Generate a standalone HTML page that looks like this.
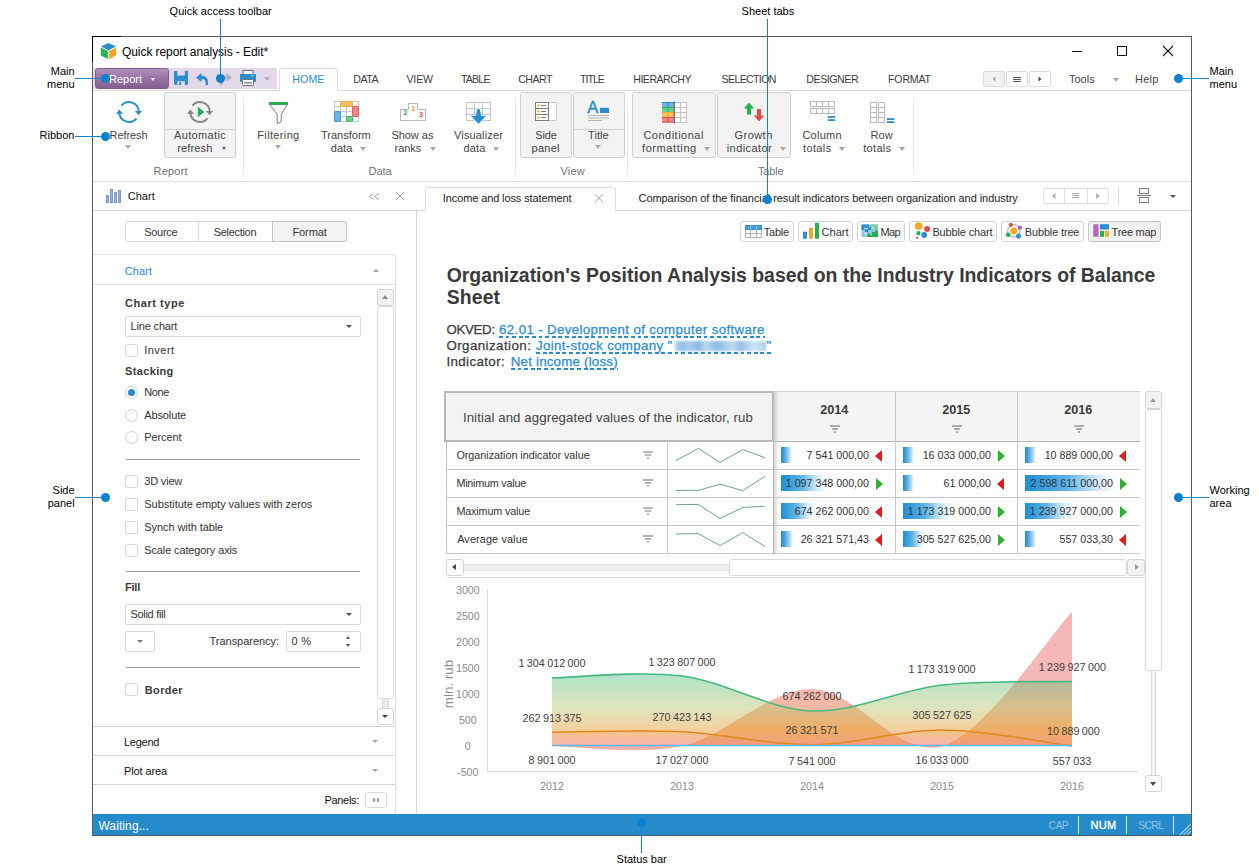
<!DOCTYPE html>
<html lang="en">
<head>
<meta charset="utf-8">
<title>Quick report analysis - Edit*</title>
<style>
*{box-sizing:border-box;margin:0;padding:0}
html,body{width:1259px;height:868px;overflow:hidden;background:#fff}
body{position:relative;font-family:"Liberation Sans",sans-serif;font-size:11px;color:#333}
.abs{position:absolute}
.t{position:absolute;white-space:nowrap;line-height:1}
/* annotations */
.an{position:absolute;white-space:nowrap;font:11px/13px "Liberation Sans",sans-serif;color:#000;z-index:50}
.ln{position:absolute;background:#0f83cc;z-index:50}
.dot{position:absolute;width:9px;height:9px;border-radius:50%;background:#0a82cf;z-index:51}
/* window */
#win{position:absolute;left:92px;top:36px;width:1100px;height:800px;border:1px solid #5a5a5a;background:#fff}
/* everything inside positioned relative to page (not window) for easy measuring */
#ui{position:absolute;left:0;top:0;width:1259px;height:868px}
.seg{font-family:"Liberation Sans",sans-serif;font-size:12px;color:#444}
.mt{position:absolute;white-space:nowrap;font-size:10.5px;line-height:12px;color:#3c3c3c;top:73px;letter-spacing:-0.2px}
.rb{position:absolute;top:92px;height:66px;border:1px solid #cfcfcf;border-radius:3px;background:#f3f3f3}
.rl{position:absolute;white-space:nowrap;text-align:center;font-size:12px;line-height:13px;color:#444;transform:translateX(-50%)}
.gl{position:absolute;white-space:nowrap;font-size:11.5px;line-height:12px;color:#6e6e6e;top:165px;transform:translateX(-50%)}
.gs{position:absolute;top:93px;height:85px;width:1px;background:linear-gradient(rgba(226,226,226,0.3),#e3e3e3 18%,#e3e3e3 82%,rgba(226,226,226,0.3))}
.da{position:absolute;width:0;height:0;border-left:3.5px solid transparent;border-right:3.5px solid transparent;border-top:4px solid #a8a8a8}
.dad{border-top-color:#555}
.sp{position:absolute;white-space:nowrap;font-size:11px;line-height:13px;color:#333}
.cb{position:absolute;left:125px;width:13px;height:13px;border:1px solid #d6d6d6;border-radius:2px;background:#fff}
.rd{position:absolute;left:125px;width:13px;height:13px;border:1px solid #d0d0d0;border-radius:50%;background:#fff}
.hr{position:absolute;left:126px;width:234px;height:1px;background:#9c9c9c}
.sel{position:absolute;left:125px;width:236px;height:21px;border:1px solid #d9d9d9;border-radius:2px;background:#fff}
.vb{position:absolute;top:221px;height:21px;border:1px solid #d4d4d4;border-radius:3px;background:#fff}
.vb span{position:absolute;top:4px;font-size:11px;line-height:13px;color:#333;white-space:nowrap}
.rowl{position:absolute;left:456px;font-size:10.7px;line-height:12px;color:#333;white-space:nowrap}
.val{position:absolute;font-size:10.7px;line-height:12px;color:#333;white-space:nowrap;text-align:right}
.bar{position:absolute;height:16px;background:linear-gradient(90deg,#1d8fd6 0%,#5fb3e6 45%,rgba(190,225,246,.6) 80%,rgba(255,255,255,0) 100%)}
.hl{position:absolute;height:1px;background:#c9c9c9}
.vl{position:absolute;width:1px;background:#c9c9c9}
.tr{position:absolute;width:0;height:0;border-top:6.3px solid transparent;border-bottom:6.3px solid transparent}
.trr{border-left:7.6px solid #2fb12f}
.trl{border-right:7.6px solid #e51a1a}
</style>
</head>
<body>
<div id="win"></div>
<div id="ui">
<!-- annotations -->
<div class="an" style="left:169.6px;top:4.7px">Quick access toolbar</div>
<div class="ln" style="left:220px;top:19px;width:1px;height:58px"></div>
<div class="dot" style="left:216px;top:74px"></div>
<div class="an" style="left:741.6px;top:4.7px">Sheet tabs</div>
<div class="ln" style="left:767px;top:19px;width:1px;height:178px"></div>
<div class="dot" style="left:763px;top:195px"></div>
<div class="an" style="left:30px;top:64.7px;width:44.6px;text-align:right">Main<br>menu</div>
<div class="ln" style="left:75px;top:78px;width:28px;height:1px"></div>
<div class="dot" style="left:101px;top:74px"></div>
<div class="an" style="left:30px;top:128.6px;width:44.4px;text-align:right">Ribbon</div>
<div class="ln" style="left:75px;top:136px;width:28px;height:1px"></div>
<div class="dot" style="left:101px;top:132px"></div>
<div class="an" style="left:30px;top:483.7px;width:44.6px;text-align:right">Side<br>panel</div>
<div class="ln" style="left:75px;top:497px;width:28px;height:1px"></div>
<div class="dot" style="left:101px;top:493px"></div>
<div class="an" style="left:1209.5px;top:64.7px">Main<br>menu</div>
<div class="ln" style="left:1181px;top:78px;width:28px;height:1px"></div>
<div class="dot" style="left:1174px;top:74px"></div>
<div class="an" style="left:1209.5px;top:483.7px">Working<br>area</div>
<div class="ln" style="left:1181px;top:497px;width:28px;height:1px"></div>
<div class="dot" style="left:1174px;top:493px"></div>
<div class="an" style="left:616.6px;top:852.7px">Status bar</div>
<div class="ln" style="left:641px;top:825px;width:1px;height:28px"></div>
<div class="dot" style="left:637px;top:818px"></div>
<!-- title bar -->
<div class="abs" style="left:92px;top:36px;width:29px;height:1px;background:#000"></div>
<div class="abs" style="left:92px;top:36px;width:1px;height:26px;background:#000"></div>
<svg class="abs" style="left:100px;top:42px" width="17" height="18" viewBox="0 0 17 18">
<polygon points="8.5,1 16,4.6 8.5,8.2 1,4.6" fill="#2b8ccf"/>
<polygon points="0.8,5.6 7.9,9 7.9,17 0.8,13.4" fill="#27b35a"/>
<polygon points="9.1,9 16.2,5.6 16.2,13.4 9.1,17" fill="#f5a623"/>
</svg>
<div class="t" style="left:122px;top:45px;font-size:12px;line-height:14px;color:#000;letter-spacing:-0.07px">Quick report analysis - Edit*</div>
<div class="abs" style="left:1072px;top:51px;width:10px;height:1px;background:#111"></div>
<div class="abs" style="left:1117px;top:46px;width:10px;height:10px;border:1px solid #111"></div>
<svg class="abs" style="left:1162px;top:45px" width="12" height="12" viewBox="0 0 12 12"><path d="M1 1 L11 11 M11 1 L1 11" stroke="#111" stroke-width="1.1" fill="none"/></svg>
<!-- menu bar -->
<div class="abs" style="left:93px;top:68px;width:184px;height:21px;background:#e3d8e8"></div>
<div class="abs" style="left:95px;top:68px;width:74px;height:21px;border:1px solid #7f5c8c;border-radius:3px;background:linear-gradient(#b391be,#9a74a7 45%,#83608f)"></div>
<div class="t" style="left:109px;top:72.5px;font-size:11px;line-height:13px;color:#fff">Report</div>
<div class="da" style="left:150.5px;top:78px;border-top-color:#fff;border-left-width:2.7px;border-right-width:2.7px;border-top-width:3px"></div>
<!-- quick access icons -->
<svg class="abs" style="left:173px;top:70px" width="16" height="16" viewBox="0 0 16 16">
<path d="M1 1 H4.3 V5.6 H11.9 V1 H15 V13.8 L13.8 15 H11.9 V11.3 H4.3 V15 H2.2 L1 13.8 Z" fill="#2b8ccf"/>
<rect x="6.1" y="12.2" width="2" height="2.8" fill="#2b8ccf"/>
</svg>
<svg class="abs" style="left:195px;top:72px" width="14" height="14" viewBox="0 0 14 14">
<path d="M1 5.5 L6.5 1 V3.8 C10.5 3.8 13 6.3 13 10 V13 H10.6 V10 C10.6 7.8 9 6.9 6.5 6.9 V10 Z" fill="#2b8ccf"/>
</svg>
<svg class="abs" style="left:213px;top:72px" width="20" height="14" viewBox="0 0 20 14">
<path d="M19 5.5 L13.5 1 V3.8 C9.5 3.8 7 6.3 7 10 V13 H9.4 V10 C9.4 7.8 11 6.9 13.5 6.9 V10 Z" fill="#b7aebb"/>
</svg>
<svg class="abs" style="left:240px;top:70px" width="16" height="16" viewBox="0 0 16 16">
<rect x="3" y="0.5" width="10" height="5" fill="#fff" stroke="#6d6d6d" stroke-width="1"/>
<rect x="0" y="4" width="16" height="8" rx="1" fill="#2b8ccf"/>
<rect x="11" y="5" width="3" height="1.4" fill="#7fc0ea"/>
<rect x="2.5" y="9.5" width="11" height="6" rx="1" fill="#fff" stroke="#6d6d6d" stroke-width="1"/>
<rect x="4" y="12.2" width="8" height="1.2" fill="#6d6d6d"/>
</svg>
<div class="da" style="left:264px;top:77px;border-top-color:#b5abb9"></div>
<!-- tabs -->
<div class="abs" style="left:93px;top:90px;width:1098px;height:1px;background:#dcdcdc"></div>
<div class="abs" style="left:279px;top:68px;width:59px;height:23px;border:1px solid #dcdcdc;border-bottom:none;border-radius:3px 3px 0 0;background:#fff"></div>
<div class="t" style="left:292.3px;top:73.4px;font:10.6px/12px 'Liberation Sans',sans-serif;letter-spacing:0.1px;color:#2a8bd0">HOME</div>
<div class="t" style="left:353.3px;top:73.4px;font:10.6px/12px 'Liberation Sans',sans-serif;letter-spacing:-0.5px;color:#3c3c3c">DATA</div>
<div class="t" style="left:406.4px;top:73.4px;font:10.6px/12px 'Liberation Sans',sans-serif;letter-spacing:-0.12px;color:#3c3c3c">VIEW</div>
<div class="t" style="left:461px;top:73.4px;font:10.6px/12px 'Liberation Sans',sans-serif;letter-spacing:-0.82px;color:#3c3c3c">TABLE</div>
<div class="t" style="left:518.2px;top:73.4px;font:10.6px/12px 'Liberation Sans',sans-serif;letter-spacing:-0.5px;color:#3c3c3c">CHART</div>
<div class="t" style="left:580px;top:73.4px;font:10.6px/12px 'Liberation Sans',sans-serif;letter-spacing:-0.99px;color:#3c3c3c">TITLE</div>
<div class="t" style="left:633.3px;top:73.4px;font:10.6px/12px 'Liberation Sans',sans-serif;letter-spacing:-0.52px;color:#3c3c3c">HIERARCHY</div>
<div class="t" style="left:721.6px;top:73.4px;font:10.6px/12px 'Liberation Sans',sans-serif;letter-spacing:-0.66px;color:#3c3c3c">SELECTION</div>
<div class="t" style="left:806.3px;top:73.4px;font:10.6px/12px 'Liberation Sans',sans-serif;letter-spacing:-0.44px;color:#3c3c3c">DESIGNER</div>
<div class="t" style="left:888.1px;top:73.4px;font:10.6px/12px 'Liberation Sans',sans-serif;letter-spacing:-0.21px;color:#3c3c3c">FORMAT</div>

<!-- nav buttons -->
<div class="abs" style="left:983px;top:71px;width:22px;height:16px;border:1px solid #dadada;border-radius:2px;background:#f1f1f1"></div>
<div class="abs" style="left:1006px;top:71px;width:22px;height:16px;border:1px solid #dadada;border-radius:2px;background:#fff"></div>
<div class="abs" style="left:1029px;top:71px;width:22px;height:16px;border:1px solid #dadada;border-radius:2px;background:#fff"></div>
<svg class="abs" style="left:983px;top:71px" width="68" height="16" viewBox="0 0 68 16">
<path d="M12.5 5.5 L9.5 8 L12.5 10.5 Z" fill="#aaa"/>
<path d="M30 6.5 h8 M30 8.5 h8 M30 10.5 h8" stroke="#555" stroke-width="1"/>
<path d="M55.5 5.5 L58.5 8 L55.5 10.5 Z" fill="#444"/>
</svg>
<div class="t" style="left:1069px;top:73px;font-size:11px;line-height:13px;color:#444">Tools</div>
<div class="da" style="left:1113px;top:78px"></div>
<div class="t" style="left:1135px;top:73px;font-size:11px;line-height:13px;color:#444;letter-spacing:0.25px">Help</div>
<!-- ribbon -->
<div class="abs" style="left:93px;top:181px;width:1098px;height:1px;background:#dedede"></div>
<div class="rb" style="left:164px;width:72px"></div><div class="abs" style="left:165px;top:129px;width:70px;height:1px;background:#cfcfcf"></div>
<div class="rb" style="left:520px;width:52px"></div>
<div class="rb" style="left:573px;width:52px"></div><div class="abs" style="left:574px;top:129px;width:50px;height:1px;background:#cfcfcf"></div>
<div class="rb" style="left:632px;width:84px"></div>
<div class="rb" style="left:717px;width:74px"></div>
<div class="gs" style="left:243px"></div><div class="gs" style="left:515px"></div><div class="gs" style="left:627px"></div><div class="gs" style="left:913px"></div>
<!-- refresh icon -->
<svg class="abs" style="left:115px;top:99px" width="28" height="26" viewBox="0 0 28 26">
<path d="M6.5 6.7 A9.7 9.7 0 0 1 23.7 12.5" fill="none" stroke="#2b8ccf" stroke-width="2"/>
<path d="M21.5 19.3 A9.7 9.7 0 0 1 4.3 13.5" fill="none" stroke="#2b8ccf" stroke-width="2"/>
<path d="M19.9 12 H27.1 L23.6 16.3 Z" fill="#2b8ccf"/>
<path d="M0.9 14.8 H8.1 L4.3 10.6 Z" fill="#2b8ccf"/>
</svg>
<div class="da" style="left:125px;top:145px"></div>
<!-- auto refresh icon -->
<svg class="abs" style="left:186px;top:99px" width="28" height="26" viewBox="0 0 28 26">
<path d="M6.5 6.7 A9.7 9.7 0 0 1 23.7 12.5" fill="none" stroke="#858585" stroke-width="2"/>
<path d="M21.5 19.3 A9.7 9.7 0 0 1 4.3 13.5" fill="none" stroke="#858585" stroke-width="2"/>
<path d="M19.9 12 H27.1 L23.6 16.3 Z" fill="#858585"/>
<path d="M0.9 14.8 H8.1 L4.3 10.6 Z" fill="#858585"/>
<path d="M11.8 7.8 L18.2 13 L11.8 18.3 Z" fill="#22b14c"/>
</svg>
<div class="da dad" style="left:222px;top:147.2px;border-left-width:2.7px;border-right-width:2.7px;border-top-width:3px"></div>
<!-- filter icon -->
<svg class="abs" style="left:268px;top:101px" width="21" height="24" viewBox="0 0 21 24">
<path d="M1.5 3.5 L9.2 13.2 V22.6 L13.3 20.8 V13.2 L19.6 3.5 Z" fill="#fff" stroke="#7d7d7d" stroke-width="1"/>
<rect x="1" y="1" width="19" height="2.8" rx="0.8" fill="#22b14c"/>
</svg>
<div class="da" style="left:275px;top:145px"></div>
<!-- transform data icon -->
<svg class="abs" style="left:334px;top:101px" width="26" height="22" viewBox="0 0 26 22">
<rect x="0.5" y="0.5" width="24" height="20" fill="#fff" stroke="#c8c8c8"/>
<path d="M6.5 0.5 V20.5 M12.5 0.5 V20.5 M18.5 0.5 V20.5 M0.5 5.5 H24.5 M0.5 10.5 H24.5 M0.5 15.5 H24.5" stroke="#c8c8c8" stroke-width="1" fill="none"/>
<rect x="6.5" y="0.5" width="12" height="5" rx="1" fill="#f8c262" stroke="#f5a623" stroke-width="0.8"/>
<rect x="18.5" y="5.5" width="6" height="10" rx="1" fill="#ee8a8a" stroke="#e24a4a" stroke-width="0.8"/>
<rect x="0.5" y="10.5" width="6" height="10" rx="1" fill="#6db2e2" stroke="#2b8ccf" stroke-width="0.8"/>
<rect x="12.5" y="15.5" width="6" height="5" rx="1" fill="#6dcf91" stroke="#27b35a" stroke-width="0.8"/>
</svg>
<div class="da" style="left:360px;top:147px"></div>
<!-- show as ranks icon -->
<svg class="abs" style="left:399px;top:102px" width="28" height="20" viewBox="0 0 28 20">
<path d="M1.5 18.5 V7.5 H9.5 V1.5 H18.5 V7.5 H26.5 V18.5 Z" fill="#fff" stroke="#b9b9b9" stroke-width="1"/>
<text x="4.2" y="13" font-family="Liberation Sans, sans-serif" font-size="7.5" font-weight="bold" fill="#27b35a">2</text>
<text x="12.2" y="9" font-family="Liberation Sans, sans-serif" font-size="7.5" font-weight="bold" fill="#f5a623">1</text>
<text x="20" y="15" font-family="Liberation Sans, sans-serif" font-size="7.5" font-weight="bold" fill="#e24a4a">3</text>
</svg>
<div class="da" style="left:430px;top:147px"></div>
<!-- visualizer data icon -->
<svg class="abs" style="left:465px;top:101px" width="27" height="24" viewBox="0 0 27 24">
<rect x="1.5" y="1.5" width="24" height="18" fill="#fff" stroke="#c4c4c4"/>
<path d="M9.5 1.5 V19.5 M17.5 1.5 V19.5 M1.5 7.5 H25.5 M1.5 13.5 H25.5" stroke="#c4c4c4" fill="none"/>
<path d="M12 7.5 H15 L16.6 14.6 H21.8 L13.5 23.2 L5.2 14.6 H10.4 Z" fill="#2b8ccf" stroke="#fff" stroke-width="0.8"/>
</svg>
<div class="da" style="left:493px;top:147px"></div>
<!-- side panel icon -->
<svg class="abs" style="left:534px;top:101px" width="24" height="21" viewBox="0 0 24 21">
<rect x="1.5" y="1.5" width="21" height="18" rx="1" fill="#fff" stroke="#c9c9c9"/>
<rect x="1.5" y="1.5" width="13" height="18" fill="#fff" stroke="#7d7d7d"/>
<path d="M1.5 7.5 H14.5 M1.5 13.5 H14.5" stroke="#7d7d7d"/>
<rect x="3.5" y="3.5" width="2" height="2" fill="#f5a623"/><rect x="3.5" y="9.5" width="2" height="2" fill="#f5a623"/><rect x="3.5" y="15.5" width="2" height="2" fill="#f5a623"/>
<path d="M7 4.5 H12 M7 10.5 H12 M7 16.5 H12" stroke="#7d7d7d"/>
</svg>
<!-- title icon -->
<svg class="abs" style="left:587px;top:100px" width="24" height="24" viewBox="0 0 24 24">
<text x="0.2" y="13" font-family="Liberation Sans, sans-serif" font-size="16.5" fill="#2b8ccf" stroke="#2b8ccf" stroke-width="0.4">A</text>
<rect x="13" y="7.8" width="9" height="5.2" fill="#2b8ccf"/>
<path d="M1 15.5 H22 M1 18 H22 M1 20.5 H15" stroke="#b5b5b5" stroke-width="1"/>
</svg>
<div class="da" style="left:595px;top:145px"></div>
<!-- conditional formatting icon -->
<svg class="abs" style="left:661px;top:101px" width="27" height="23" viewBox="0 0 27 23">
<rect x="13" y="1.5" width="12.5" height="20" fill="#fff" stroke="#c4c4c4"/>
<path d="M19.5 1.5 V21.5 M13 6.5 H25.5 M13 11.5 H25.5 M13 16.5 H25.5" stroke="#c4c4c4" fill="none"/>
<rect x="1" y="1" width="12" height="5" fill="#6db2e2"/><rect x="1" y="6" width="12" height="5" fill="#6dcf91"/><rect x="1" y="11" width="12" height="5" fill="#f8c262"/><rect x="1" y="16" width="12" height="5.5" fill="#ee8a8a"/>
<path d="M1 1.5 H13 M7 1 V6" stroke="#2b8ccf" fill="none"/><path d="M1 6.5 H13 M7 6 V11" stroke="#27b35a" fill="none"/><path d="M1 11.5 H13 M7 11 V16" stroke="#f5a623" fill="none"/><path d="M1 16.5 H13 M7 16 V21.5 M1 21 H13" stroke="#e24a4a" fill="none"/>
<path d="M13.3 0.5 V22.5" stroke="#6a6a6a" stroke-width="1.2"/>
</svg>
<div class="da" style="left:704px;top:147px"></div>
<!-- growth indicator icon -->
<svg class="abs" style="left:743px;top:102px" width="22" height="20" viewBox="0 0 22 20">
<path d="M6 0.5 L11.2 6.5 H8 V12.5 H4 V6.5 H0.8 Z" fill="#22b14c"/>
<path d="M16 19.5 L10.8 13.5 H14 V7 H18 V13.5 H21.2 Z" fill="#e24a4a"/>
</svg>
<div class="da" style="left:780px;top:147px"></div>
<!-- column totals icon -->
<svg class="abs" style="left:809px;top:100px" width="28" height="22" viewBox="0 0 28 22">
<path d="M1.5 1.5 H25.5 V6.5 H1.5 Z M1.5 8.5 H25.5 V13.5 H1.5 Z M7.5 1.5 V6.5 M13.5 1.5 V6.5 M19.5 1.5 V6.5 M7.5 8.5 V13.5 M13.5 8.5 V13.5 M19.5 8.5 V13.5" fill="none" stroke="#b9b9b9"/>
<rect x="18.8" y="16" width="7.4" height="1.8" fill="#2b8ccf"/><rect x="18.8" y="19.2" width="7.4" height="1.8" fill="#2b8ccf"/>
</svg>
<div class="da" style="left:839px;top:147px"></div>
<!-- row totals icon -->
<svg class="abs" style="left:869px;top:101px" width="27" height="23" viewBox="0 0 27 23">
<path d="M1.5 1.5 H7.5 V21.5 H1.5 Z M9.5 1.5 H15.5 V21.5 H9.5 Z M1.5 6.5 H7.5 M1.5 11.5 H7.5 M1.5 16.5 H7.5 M9.5 6.5 H15.5 M9.5 11.5 H15.5 M9.5 16.5 H15.5" fill="none" stroke="#b9b9b9"/>
<rect x="18" y="17.2" width="7.4" height="1.8" fill="#2b8ccf"/><rect x="18" y="20.2" width="7.4" height="1.8" fill="#2b8ccf"/>
</svg>
<div class="da" style="left:899px;top:147px"></div>
<div class="t" style="left:109.6px;top:129px;font:11px/13px 'Liberation Sans',sans-serif;letter-spacing:-0.1px;color:#444">Refresh</div>
<div class="t" style="left:174px;top:129px;font:11px/13px 'Liberation Sans',sans-serif;letter-spacing:0.35px;color:#444">Automatic</div>
<div class="t" style="left:177.3px;top:142px;font:11px/13px 'Liberation Sans',sans-serif;letter-spacing:0.14px;color:#444">refresh</div>
<div class="t" style="left:257.3px;top:129px;font:11px/13px 'Liberation Sans',sans-serif;letter-spacing:0.35px;color:#444">Filtering</div>
<div class="t" style="left:321px;top:129px;font:11px/13px 'Liberation Sans',sans-serif;color:#444">Transform</div>
<div class="t" style="left:330.8px;top:142px;font:11px/13px 'Liberation Sans',sans-serif;letter-spacing:0.04px;color:#444">data</div>
<div class="t" style="left:391.4px;top:129px;font:11px/13px 'Liberation Sans',sans-serif;letter-spacing:-0.03px;color:#444">Show as</div>
<div class="t" style="left:394.6px;top:142px;font:11px/13px 'Liberation Sans',sans-serif;letter-spacing:-0.04px;color:#444">ranks</div>
<div class="t" style="left:454px;top:129px;font:11px/13px 'Liberation Sans',sans-serif;letter-spacing:0.15px;color:#444">Visualizer</div>
<div class="t" style="left:463.6px;top:142px;font:11px/13px 'Liberation Sans',sans-serif;letter-spacing:0.12px;color:#444">data</div>
<div class="t" style="left:535.3px;top:129px;font:11px/13px 'Liberation Sans',sans-serif;letter-spacing:-0.16px;color:#444">Side</div>
<div class="t" style="left:531.5px;top:142px;font:11px/13px 'Liberation Sans',sans-serif;letter-spacing:0.26px;color:#444">panel</div>
<div class="t" style="left:588px;top:129px;font:11px/13px 'Liberation Sans',sans-serif;letter-spacing:0.08px;color:#444">Title</div>
<div class="t" style="left:643.4px;top:129px;font:11px/13px 'Liberation Sans',sans-serif;letter-spacing:0.49px;color:#444">Conditional</div>
<div class="t" style="left:642px;top:142px;font:11px/13px 'Liberation Sans',sans-serif;letter-spacing:0.59px;color:#444">formatting</div>
<div class="t" style="left:734.5px;top:129px;font:11px/13px 'Liberation Sans',sans-serif;letter-spacing:0.46px;color:#444">Growth</div>
<div class="t" style="left:726.7px;top:142px;font:11px/13px 'Liberation Sans',sans-serif;letter-spacing:0.44px;color:#444">indicator</div>
<div class="t" style="left:802.4px;top:129px;font:11px/13px 'Liberation Sans',sans-serif;letter-spacing:0.25px;color:#444">Column</div>
<div class="t" style="left:803px;top:142px;font:11px/13px 'Liberation Sans',sans-serif;letter-spacing:0.38px;color:#444">totals</div>
<div class="t" style="left:870.4px;top:129px;font:11px/13px 'Liberation Sans',sans-serif;letter-spacing:0.19px;color:#444">Row</div>
<div class="t" style="left:863.2px;top:142px;font:11px/13px 'Liberation Sans',sans-serif;letter-spacing:0.32px;color:#444">totals</div>
<div class="t" style="left:153.5px;top:165px;font:11px/13px 'Liberation Sans',sans-serif;letter-spacing:0.21px;color:#757078">Report</div>
<div class="t" style="left:368.5px;top:165px;font:11px/13px 'Liberation Sans',sans-serif;color:#757078">Data</div>
<div class="t" style="left:560.4px;top:165px;font:11px/13px 'Liberation Sans',sans-serif;letter-spacing:0.21px;color:#757078">View</div>
<div class="t" style="left:758px;top:165px;font:11px/13px 'Liberation Sans',sans-serif;letter-spacing:-0.2px;color:#757078">Table</div>
<!-- side panel -->
<div class="abs" style="left:93px;top:210px;width:324px;height:1px;background:#dcdcdc"></div>
<div class="abs" style="left:416px;top:210px;width:1px;height:604px;background:#d6d6d6"></div>
<svg class="abs" style="left:105px;top:188px" width="17" height="16" viewBox="0 0 17 16">
<rect x="1.5" y="7.5" width="2" height="7" fill="#9db3d2" stroke="#7a97bf"/>
<rect x="5.5" y="1.5" width="2" height="13" fill="#9db3d2" stroke="#7a97bf"/>
<rect x="9.5" y="4.5" width="2" height="10" fill="#9db3d2" stroke="#7a97bf"/>
<rect x="13.5" y="2.5" width="2" height="12" fill="#9db3d2" stroke="#7a97bf"/>
</svg>

<svg class="abs" style="left:368px;top:192px" width="12" height="9" viewBox="0 0 12 9"><path d="M5.8 1.6 L1.2 4.5 L5.8 7.4 M10.9 1.6 L6.3 4.5 L10.9 7.4" fill="none" stroke="#a6a6a6" stroke-width="1"/></svg>
<svg class="abs" style="left:395px;top:191px" width="10" height="10" viewBox="0 0 10 10"><path d="M1 1 L9 9 M9 1 L1 9" stroke="#a0a0a0" stroke-width="1" fill="none"/></svg>
<!-- tabs -->
<div class="abs" style="left:125px;top:221px;width:222px;height:21px;border:1px solid #d9d9d9;border-radius:3px;background:#fff"></div>
<div class="abs" style="left:198px;top:222px;width:1px;height:19px;background:#d9d9d9"></div>
<div class="abs" style="left:272px;top:221px;width:75px;height:21px;border:1px solid #c4c4c4;border-radius:0 3px 3px 0;background:#f3f3f3"></div>



<!-- accordion: Chart -->
<div class="abs" style="left:93px;top:254px;width:303px;height:31px;border:1px solid #e0e0e0;border-left:none;border-radius:0 3px 0 0;background:#fff"></div>
<div class="abs" style="left:395px;top:257px;width:1px;height:557px;background:#e0e0e0"></div>

<div class="abs" style="left:373px;top:269px;width:0;height:0;border-left:3px solid transparent;border-right:3px solid transparent;border-bottom:3px solid #a5a5a5"></div>
<!-- scrollbar -->
<div class="abs" style="left:377px;top:289px;width:17px;height:17px;border:1px solid #d4d4d4;border-radius:3px;background:#f3f3f3"></div>
<div class="abs" style="left:382px;top:295px;width:0;height:0;border-left:3.5px solid transparent;border-right:3.5px solid transparent;border-bottom:4px solid #8a8a8a"></div>
<div class="abs" style="left:377px;top:306px;width:17px;height:393px;border:1px solid #d9d9d9;border-radius:3px;background:#fff"></div>
<div class="abs" style="left:382px;top:699px;width:7px;height:10px;border-left:1px solid #d9d9d9;border-right:1px solid #d9d9d9;background:#ececec"></div>
<div class="abs" style="left:377px;top:708px;width:17px;height:17px;border:1px solid #d4d4d4;border-radius:3px;background:#fff"></div>
<div class="abs" style="left:382.4px;top:715px;width:0;height:0;border-left:3px solid transparent;border-right:3px solid transparent;border-top:3.3px solid #444"></div>
<!-- content -->

<div class="sel" style="top:316px"></div>

<div class="da dad" style="left:346px;top:325px;border-left-width:3px;border-right-width:3px;border-top-width:3.3px"></div>
<div class="cb" style="top:344px"></div>

<div class="rd" style="top:386px"></div><div class="abs" style="left:128px;top:389px;width:7px;height:7px;border-radius:50%;background:#2a8bd0"></div>
<div class="rd" style="top:408.5px"></div>
<div class="rd" style="top:430.5px"></div>
<div class="hr" style="top:459px"></div>
<div class="cb" style="top:474.5px"></div>
<div class="cb" style="top:497.5px"></div>
<div class="cb" style="top:520.5px"></div>
<div class="cb" style="top:543.5px"></div>
<div class="hr" style="top:571px"></div>

<div class="sel" style="top:604px"></div>

<div class="da dad" style="left:346px;top:613px;border-left-width:3px;border-right-width:3px;border-top-width:3.3px"></div>
<div class="abs" style="left:125px;top:631px;width:30px;height:21px;border:1px solid #d9d9d9;border-radius:2px;background:#fff"></div>
<div class="da" style="left:137px;top:640px;border-top-color:#777;border-left-width:3px;border-right-width:3px;border-top-width:3px"></div>

<div class="abs" style="left:286px;top:631px;width:75px;height:21px;border:1px solid #d9d9d9;border-radius:2px;background:#fff"></div>

<div class="abs" style="left:345.5px;top:636px;width:0;height:0;border-left:2.8px solid transparent;border-right:2.8px solid transparent;border-bottom:3.2px solid #555"></div>
<div class="abs" style="left:345.5px;top:644px;width:0;height:0;border-left:2.8px solid transparent;border-right:2.8px solid transparent;border-top:3.2px solid #555"></div>
<div class="hr" style="top:667px"></div>
<div class="cb" style="top:683px"></div>
<!-- accordion collapsed -->
<div class="abs" style="left:93px;top:726px;width:302px;height:1px;background:#d2d2d2"></div>

<div class="da" style="left:372px;top:740px;border-top-color:#a5a5a5;border-left-width:3px;border-right-width:3px;border-top-width:3px"></div>
<div class="abs" style="left:93px;top:755px;width:302px;height:1px;background:#d9d9d9"></div>

<div class="da" style="left:372px;top:769px;border-top-color:#a5a5a5;border-left-width:3px;border-right-width:3px;border-top-width:3px"></div>
<div class="abs" style="left:93px;top:784px;width:302px;height:1px;background:#d2d2d2"></div>

<div class="abs" style="left:365px;top:792px;width:22px;height:16px;border:1px solid #dadada;border-radius:3px;background:#fff"></div>
<svg class="abs" style="left:365px;top:792px" width="22" height="16" viewBox="0 0 22 16"><path d="M8 5.5 L11 8 L8 10.5 Z M12 5.5 L15 8 L12 10.5 Z" fill="#9a9a9a"/></svg>
<!-- status bar -->
<div class="abs" style="left:93px;top:814px;width:1098px;height:21px;background:#268bcb"></div>
<div class="t" style="left:98.4px;top:818.6px;font-size:12px;line-height:14px;color:#fff;letter-spacing:0.1px">Waiting...</div>
<div class="abs" style="left:1078px;top:816px;width:1px;height:18px;background:#d5e7f4"></div>
<div class="abs" style="left:1126px;top:816px;width:1px;height:18px;background:#d5e7f4"></div>
<div class="abs" style="left:1173px;top:816px;width:1px;height:18px;background:#d5e7f4"></div>
<svg class="abs" style="left:1178px;top:821px" width="13" height="14" viewBox="0 0 13 14"><path d="M2 13.5 L13 3 M5.6 13.5 L13 6.6 M9.2 13.5 L13 10.2" stroke="#a3cbe6" stroke-width="1.1" fill="none"/></svg>
<div class="t" style="left:1048.6px;top:818.6px;font:10.4px/13px 'Liberation Sans',sans-serif;letter-spacing:-0.59px;color:#8ec3e6">CAP</div>
<div class="t" style="left:1090.6px;top:818.6px;font:11px/13px 'Liberation Sans',sans-serif;letter-spacing:0.3px;color:#fff;-webkit-text-stroke:0.35px #fff">NUM</div>
<div class="t" style="left:1138.3px;top:818.6px;font:10.4px/13px 'Liberation Sans',sans-serif;letter-spacing:-0.7px;color:#8ec3e6">SCRL</div>

<!-- side panel text -->
<div class="t" style="left:127.7px;top:189.6px;font:11px/13px 'Liberation Sans',sans-serif;letter-spacing:0.04px;color:#111">Chart</div>
<div class="t" style="left:144.3px;top:226px;font:11px/13px 'Liberation Sans',sans-serif;letter-spacing:-0.33px;color:#333">Source</div>
<div class="t" style="left:213.7px;top:226px;font:11px/13px 'Liberation Sans',sans-serif;letter-spacing:-0.3px;color:#333">Selection</div>
<div class="t" style="left:292.5px;top:226px;font:11px/13px 'Liberation Sans',sans-serif;letter-spacing:-0.12px;color:#333">Format</div>
<div class="t" style="left:124.8px;top:264.6px;font:11px/13px 'Liberation Sans',sans-serif;letter-spacing:0.02px;color:#2a8bd0">Chart</div>
<div class="t" style="left:125.1px;top:296.6px;font:bold 11px/13px 'Liberation Sans',sans-serif;letter-spacing:0.53px;color:#3a3a3a">Chart type</div>
<div class="t" style="left:130.5px;top:319.6px;font:11px/13px 'Liberation Sans',sans-serif;letter-spacing:-0.16px;color:#333">Line chart</div>
<div class="t" style="left:144.3px;top:344px;font:11px/13px 'Liberation Sans',sans-serif;letter-spacing:0.45px;color:#333">Invert</div>
<div class="t" style="left:125.1px;top:364.6px;font:bold 11px/13px 'Liberation Sans',sans-serif;letter-spacing:0.34px;color:#3a3a3a">Stacking</div>
<div class="t" style="left:144.3px;top:386px;font:11px/13px 'Liberation Sans',sans-serif;letter-spacing:-0.37px;color:#333">None</div>
<div class="t" style="left:144.3px;top:408.5px;font:11px/13px 'Liberation Sans',sans-serif;letter-spacing:-0.13px;color:#333">Absolute</div>
<div class="t" style="left:144.3px;top:430.5px;font:11px/13px 'Liberation Sans',sans-serif;letter-spacing:-0.1px;color:#333">Percent</div>
<div class="t" style="left:144.3px;top:474.5px;font:11px/13px 'Liberation Sans',sans-serif;letter-spacing:-0.19px;color:#333">3D view</div>
<div class="t" style="left:144.3px;top:497.5px;font:11px/13px 'Liberation Sans',sans-serif;letter-spacing:-0.04px;color:#333">Substitute empty values with zeros</div>
<div class="t" style="left:144.3px;top:520.5px;font:11px/13px 'Liberation Sans',sans-serif;letter-spacing:-0.08px;color:#333">Synch with table</div>
<div class="t" style="left:144.3px;top:543.5px;font:11px/13px 'Liberation Sans',sans-serif;letter-spacing:-0.13px;color:#333">Scale category axis</div>
<div class="t" style="left:125.1px;top:581px;font:bold 11px/13px 'Liberation Sans',sans-serif;letter-spacing:-0.25px;color:#3a3a3a">Fill</div>
<div class="t" style="left:130.5px;top:607.6px;font:11px/13px 'Liberation Sans',sans-serif;letter-spacing:-0.31px;color:#333">Solid fill</div>
<div class="t" style="left:209.6px;top:634.6px;font:11px/13px 'Liberation Sans',sans-serif;letter-spacing:-0.04px;color:#333">Transparency:</div>
<div class="t" style="left:291.4px;top:634.6px;font:11px/13px 'Liberation Sans',sans-serif;letter-spacing:0.34px;color:#333">0 %</div>
<div class="t" style="left:144.8px;top:683.6px;font:bold 11px/13px 'Liberation Sans',sans-serif;letter-spacing:0.34px;color:#3a3a3a">Border</div>
<div class="t" style="left:124px;top:736px;font:11px/13px 'Liberation Sans',sans-serif;letter-spacing:-0.27px;color:#111">Legend</div>
<div class="t" style="left:124px;top:764.8px;font:11px/13px 'Liberation Sans',sans-serif;letter-spacing:-0.11px;color:#111">Plot area</div>
<div class="t" style="left:324.4px;top:793.6px;font:11px/13px 'Liberation Sans',sans-serif;letter-spacing:-0.3px;color:#111">Panels:</div>
<!-- working area: sheet tabs -->
<div class="abs" style="left:417px;top:210px;width:774px;height:1px;background:#dcdcdc"></div>
<div class="abs" style="left:425px;top:187px;width:191px;height:24px;border:1px solid #dcdcdc;border-bottom:none;border-radius:3px 3px 0 0;background:#fff"></div>
<svg class="abs" style="left:594px;top:193px" width="10" height="10" viewBox="0 0 10 10"><path d="M1 1.3 L9 9.3 M9 1.3 L1 9.3" stroke="#a0a0a0" stroke-width="1" fill="none"/></svg>
<div class="abs" style="left:1043px;top:188px;width:66px;height:16px;border:1px solid #dedede;border-radius:2px;background:#fff"></div>
<div class="abs" style="left:1064px;top:189px;width:1px;height:14px;background:#dedede"></div>
<div class="abs" style="left:1087px;top:189px;width:1px;height:14px;background:#dedede"></div>
<svg class="abs" style="left:1043px;top:188px" width="66" height="16" viewBox="0 0 66 16">
<path d="M12.5 5 L8.5 8 L12.5 11 Z" fill="#b5b5b5"/>
<path d="M29 5.5 h7 M29 7.5 h7 M29 9.5 h7" stroke="#a9a9a9" stroke-width="1"/>
<path d="M53 5 L57 8 L53 11 Z" fill="#b5b5b5"/>
</svg>
<div class="abs" style="left:1118px;top:187px;width:1px;height:18px;background:#dcdcdc"></div>
<svg class="abs" style="left:1136px;top:187px" width="16" height="17" viewBox="0 0 16 17">
<rect x="3.5" y="1.5" width="9" height="5" fill="#fff" stroke="#7a7a7a"/>
<path d="M1 8.5 H15" stroke="#7a7a7a"/>
<rect x="3.5" y="10.5" width="9" height="5" fill="#fff" stroke="#7a7a7a"/>
</svg>
<div class="da dad" style="left:1169.8px;top:195.2px;border-left-width:3px;border-right-width:3px;border-top-width:3.5px"></div>
<!-- view buttons -->
<div class="vb" style="left:740px;width:54px"></div>
<div class="vb" style="left:798px;width:55px"></div>
<div class="vb" style="left:857px;width:48px"></div>
<div class="vb" style="left:909px;width:88px"></div>
<div class="vb" style="left:1001px;width:83px"></div>
<div class="vb" style="left:1088px;width:73px;background:#f1f1f1;border-color:#c6c6c6"></div>
<!-- icons -->
<svg class="abs" style="left:745px;top:225px" width="17" height="13" viewBox="0 0 17 13">
<rect x="0.5" y="0.5" width="16" height="12" fill="#fff" stroke="#b0b0b0"/>
<rect x="0.5" y="0.5" width="16" height="4" fill="#4a9ddb" stroke="#2b8ccf"/>
<path d="M5.5 0.5 V12.5 M11.5 0.5 V12.5 M0.5 8.5 H16.5" stroke="#b0b0b0" fill="none"/>
<path d="M5.5 1 V4 M11.5 1 V4" stroke="#8cc3ea" fill="none"/>
</svg>
<svg class="abs" style="left:803px;top:222px" width="17" height="17" viewBox="0 0 17 17">
<rect x="0" y="9.7" width="4" height="7" fill="#2b8ccf"/><rect x="6" y="5.7" width="4" height="11" fill="#f5a623"/><rect x="12" y="0.8" width="4" height="15.9" fill="#22b14c"/>
</svg>
<svg class="abs" style="left:861px;top:224px" width="18" height="14" viewBox="0 0 18 14">
<rect x="0.5" y="0.5" width="16.5" height="12.5" rx="1" fill="#8ec6ea"/>
<path d="M0.5 0.5 H8 V3 H10 V0.5 H10 V6 H7 V8 H4 V6 H0.5 Z" fill="#2b8ccf"/>
<path d="M10 0.5 H17 V6.5 H14 V5 H12 V6.5 H10 Z" fill="#7fd0a0"/>
<path d="M6 13 V9.5 H9 V11 H11 V8 H14 V6.5 H17 V13 Z" fill="#22b14c"/>
<path d="M3 4 l2 1 l2 -1 M11 3 l2 1.5 M3 10 l2 -1 l1 2" stroke="#fff" stroke-width="0.9" fill="none"/>
</svg>
<svg class="abs" style="left:913px;top:221px" width="20" height="19" viewBox="0 0 20 19">
<circle cx="5.6" cy="5" r="3.8" fill="#f5a623"/><circle cx="14.2" cy="8" r="3" fill="#e24a4a"/>
<rect x="3.6" y="10.2" width="3.8" height="3.8" rx="0.6" fill="#22b14c"/><circle cx="11.2" cy="14" r="2.9" fill="#2b8ccf"/>
<path d="M4.2 15.3 L5.7 16.8 L4.2 18.3 L2.7 16.8 Z" fill="#b05cc0"/>
</svg>
<svg class="abs" style="left:1005px;top:221px" width="18" height="19" viewBox="0 0 18 19">
<circle cx="8.8" cy="9.9" r="6.2" fill="none" stroke="#b5b5b5" stroke-width="1.2"/>
<circle cx="8.8" cy="9.9" r="3.3" fill="#f5a623"/>
<circle cx="5.8" cy="3.8" r="2.1" fill="#e24a4a"/>
<rect x="13" y="4.8" width="3.8" height="3.8" rx="0.5" fill="#b05cc0"/>
<circle cx="3.2" cy="13.7" r="2.3" fill="#22b14c"/>
<circle cx="13.5" cy="15.1" r="2.5" fill="#2b8ccf"/>
</svg>
<svg class="abs" style="left:1093px;top:224px" width="17" height="13" viewBox="0 0 17 13">
<rect x="0.3" y="0.2" width="5.2" height="12.6" fill="#b765c5"/><rect x="7" y="0.2" width="9" height="5.3" fill="#2b8ccf"/>
<rect x="7" y="6.9" width="4.1" height="5.9" fill="#22b14c"/><rect x="12.2" y="6.9" width="3.8" height="5.9" fill="#f5a623"/>
</svg>
<div class="t" style="left:442.8px;top:191.6px;font:11px/13px 'Liberation Sans',sans-serif;letter-spacing:-0.11px;color:#222">Income and loss statement</div>
<div class="t" style="left:638.5px;top:191.6px;font:11px/13px 'Liberation Sans',sans-serif;letter-spacing:-0.06px;color:#222">Comparison of the financial result indicators between organization and industry</div>
<div class="t" style="left:763.8px;top:225.8px;font:11px/13px 'Liberation Sans',sans-serif;letter-spacing:-0.26px;color:#333">Table</div>
<div class="t" style="left:821.5px;top:225.8px;font:11px/13px 'Liberation Sans',sans-serif;letter-spacing:0.04px;color:#333">Chart</div>
<div class="t" style="left:880.4px;top:225.8px;font:11px/13px 'Liberation Sans',sans-serif;letter-spacing:-0.57px;color:#333">Map</div>
<div class="t" style="left:932.4px;top:225.8px;font:11px/13px 'Liberation Sans',sans-serif;letter-spacing:-0.14px;color:#333">Bubble chart</div>
<div class="t" style="left:1024.8px;top:225.8px;font:11px/13px 'Liberation Sans',sans-serif;letter-spacing:-0.16px;color:#333">Bubble tree</div>
<div class="t" style="left:1111.6px;top:225.8px;font:11px/13px 'Liberation Sans',sans-serif;letter-spacing:-0.26px;color:#333">Tree map</div>
<!-- report title & info -->
<div class="abs" style="left:674.5px;top:341px;width:91px;height:10px;filter:blur(0.8px);background:linear-gradient(90deg,#b5d5f0 0%,#8fbfe8 8%,#a9cdec 16%,#86b9e5 26%,#b9d7f0 34%,#8dbde7 45%,#a3caeb 55%,#c2dcf2 63%,#90bfe8 72%,#b5d5f0 80%,#d0e4f5 88%,#a9cdec 100%)"></div>
<div class="abs" style="left:499px;top:336.3px;width:266px;height:1.4px;background:repeating-linear-gradient(90deg,#2a8bd0 0 3.9px,transparent 3.9px 6.6px)"></div>
<div class="abs" style="left:536px;top:352.3px;width:235px;height:1.4px;background:repeating-linear-gradient(90deg,#2a8bd0 0 3.9px,transparent 3.9px 6.6px)"></div>
<div class="abs" style="left:510.7px;top:368.3px;width:107.5px;height:1.4px;background:repeating-linear-gradient(90deg,#2a8bd0 0 3.9px,transparent 3.9px 6.6px)"></div>
<div class="t" style="left:446.7px;top:264.3px;font:bold 19.4px/22px 'Liberation Sans',sans-serif;color:#3a3a3a">Organization&#x27;s Position Analysis based on the Industry Indicators of Balance</div>
<div class="t" style="left:446.7px;top:286px;font:bold 19.4px/22px 'Liberation Sans',sans-serif;letter-spacing:0.14px;color:#3a3a3a">Sheet</div>
<div class="t" style="left:446.4px;top:322.3px;font:13.3px/16px 'Liberation Sans',sans-serif;letter-spacing:-0.31px;color:#3a3a3a;-webkit-text-stroke:0.25px #3a3a3a">OKVED:</div>
<div class="t" style="left:499.1px;top:322.3px;font:13.3px/16px 'Liberation Sans',sans-serif;letter-spacing:0.36px;color:#2a8bd0;-webkit-text-stroke:0.25px #2a8bd0">62.01 - Development of computer software</div>
<div class="t" style="left:446.4px;top:338.2px;font:13.3px/16px 'Liberation Sans',sans-serif;letter-spacing:0.45px;color:#3a3a3a;-webkit-text-stroke:0.25px #3a3a3a">Organization:</div>
<div class="t" style="left:536.1px;top:338.2px;font:13.3px/16px 'Liberation Sans',sans-serif;letter-spacing:0.32px;color:#2a8bd0;-webkit-text-stroke:0.25px #2a8bd0">Joint-stock company &quot;</div>
<div class="t" style="left:766.5px;top:338.2px;font:13.3px/16px 'Liberation Sans',sans-serif;letter-spacing:-0.63px;color:#2a8bd0;-webkit-text-stroke:0.25px #2a8bd0">&quot;</div>
<div class="t" style="left:446.4px;top:354.1px;font:13.3px/16px 'Liberation Sans',sans-serif;letter-spacing:0.4px;color:#3a3a3a;-webkit-text-stroke:0.25px #3a3a3a">Indicator:</div>
<div class="t" style="left:510.7px;top:354.1px;font:13.3px/16px 'Liberation Sans',sans-serif;letter-spacing:0.22px;color:#2a8bd0;-webkit-text-stroke:0.25px #2a8bd0">Net income (loss)</div>
<!-- table -->
<div class="abs" style="left:773px;top:392px;width:367px;height:49px;background:#f5f5f5"></div>
<div class="hl" style="left:773px;top:391px;width:367px;background:#cfcfcf"></div>
<div class="abs" style="left:444px;top:391px;width:330px;height:51px;border:2px solid #b9b9b9;background:#f3f3f3"></div>
<div class="abs" style="left:774px;top:392px;width:5px;height:162px;background:linear-gradient(90deg,rgba(0,0,0,0.16),rgba(0,0,0,0))"></div>
<div class="hl" style="left:447px;top:469px;width:693px"></div>
<div class="hl" style="left:447px;top:497px;width:693px"></div>
<div class="hl" style="left:447px;top:525px;width:693px"></div>
<div class="hl" style="left:447px;top:553px;width:693px"></div>
<div class="hl" style="left:774px;top:441px;width:366px;background:#b4b4b4"></div>
<div class="vl" style="left:446px;top:442px;height:112px;background:#c0c0c0"></div>
<div class="vl" style="left:667px;top:442px;height:112px"></div>
<div class="vl" style="left:773px;top:442px;height:112px;background:#b9b9b9"></div>
<div class="vl" style="left:895px;top:392px;height:162px"></div>
<div class="vl" style="left:1017px;top:392px;height:162px"></div>
<svg class="abs" style="left:643px;top:451px" width="10" height="9" viewBox="0 0 10 9"><path d="M0 1 H10 M2 4 H8 M4 7 H6" stroke="#a0a0a0" stroke-width="1.6" fill="none"/></svg>
<svg class="abs" style="left:643px;top:479px" width="10" height="9" viewBox="0 0 10 9"><path d="M0 1 H10 M2 4 H8 M4 7 H6" stroke="#a0a0a0" stroke-width="1.6" fill="none"/></svg>
<svg class="abs" style="left:643px;top:507px" width="10" height="9" viewBox="0 0 10 9"><path d="M0 1 H10 M2 4 H8 M4 7 H6" stroke="#a0a0a0" stroke-width="1.6" fill="none"/></svg>
<svg class="abs" style="left:643px;top:535px" width="10" height="9" viewBox="0 0 10 9"><path d="M0 1 H10 M2 4 H8 M4 7 H6" stroke="#a0a0a0" stroke-width="1.6" fill="none"/></svg>
<svg class="abs" style="left:829.5px;top:425px" width="10" height="9" viewBox="0 0 10 9"><path d="M0 1 H10 M2 4 H8 M4 7 H6" stroke="#939393" stroke-width="1.6" fill="none"/></svg>
<svg class="abs" style="left:951.5px;top:425px" width="10" height="9" viewBox="0 0 10 9"><path d="M0 1 H10 M2 4 H8 M4 7 H6" stroke="#939393" stroke-width="1.6" fill="none"/></svg>
<svg class="abs" style="left:1073.5px;top:425px" width="10" height="9" viewBox="0 0 10 9"><path d="M0 1 H10 M2 4 H8 M4 7 H6" stroke="#939393" stroke-width="1.6" fill="none"/></svg>
<svg class="abs" style="left:0;top:0" width="1259" height="868" viewBox="0 0 1259 868">
<polyline points="676,460.6 698.3,448.4 720,462.4 742.8,449.5 765,457.7" fill="none" stroke="#6aa39b" stroke-width="1"/>
<polyline points="676,490.4 698.3,490.4 720,484.2 742.8,490.6 765,476.3" fill="none" stroke="#6aa39b" stroke-width="1"/>
<polyline points="676,504.7 698.3,504.4 720,518.5 742.8,507.5 765,506.2" fill="none" stroke="#6aa39b" stroke-width="1"/>
<polyline points="676,534 698.3,533.6 720,545.6 742.8,532.5 765,546.5" fill="none" stroke="#6aa39b" stroke-width="1"/>
</svg>
<div class="bar" style="left:781.0px;top:447px;width:10.5px;background:linear-gradient(90deg,#1d8fd6 0%,#3f9fdd 25%,#a9d3f0 70%,rgba(255,255,255,0) 100%)"></div>
<div class="tr trl" style="left:875.0px;top:449.6px"></div>
<div class="bar" style="left:781.0px;top:475px;width:46px"></div>
<div class="tr trr" style="left:876.2px;top:477.7px"></div>
<div class="bar" style="left:781.0px;top:503px;width:33px"></div>
<div class="tr trl" style="left:875.0px;top:505.6px"></div>
<div class="bar" style="left:781.0px;top:531px;width:11.5px;background:linear-gradient(90deg,#1d8fd6 0%,#3f9fdd 25%,#a9d3f0 70%,rgba(255,255,255,0) 100%)"></div>
<div class="tr trl" style="left:875.0px;top:533.6px"></div>
<div class="bar" style="left:903.0px;top:447px;width:10.5px;background:linear-gradient(90deg,#1d8fd6 0%,#3f9fdd 25%,#a9d3f0 70%,rgba(255,255,255,0) 100%)"></div>
<div class="tr trr" style="left:998.2px;top:449.7px"></div>
<div class="bar" style="left:903.0px;top:475px;width:10.5px;background:linear-gradient(90deg,#1d8fd6 0%,#3f9fdd 25%,#a9d3f0 70%,rgba(255,255,255,0) 100%)"></div>
<div class="tr trl" style="left:997.0px;top:477.6px"></div>
<div class="bar" style="left:903.0px;top:503px;width:49px"></div>
<div class="tr trr" style="left:998.2px;top:505.7px"></div>
<div class="bar" style="left:903.0px;top:531px;width:20.5px"></div>
<div class="tr trr" style="left:998.2px;top:533.7px"></div>
<div class="bar" style="left:1025.0px;top:447px;width:10.5px;background:linear-gradient(90deg,#1d8fd6 0%,#3f9fdd 25%,#a9d3f0 70%,rgba(255,255,255,0) 100%)"></div>
<div class="tr trl" style="left:1119.0px;top:449.6px"></div>
<div class="bar" style="left:1025.0px;top:475px;width:92px"></div>
<div class="tr trr" style="left:1120.2px;top:477.7px"></div>
<div class="bar" style="left:1025.0px;top:503px;width:48px"></div>
<div class="tr trr" style="left:1120.2px;top:505.7px"></div>
<div class="bar" style="left:1025.0px;top:531px;width:10.5px;background:linear-gradient(90deg,#1d8fd6 0%,#3f9fdd 25%,#a9d3f0 70%,rgba(255,255,255,0) 100%)"></div>
<div class="tr trl" style="left:1119.0px;top:533.6px"></div>
<div class="val" style="left:778.4px;width:90.6px;top:449.2px">7 541 000,00</div>
<div class="val" style="left:778.4px;width:90.6px;top:477.2px">1 097 348 000,00</div>
<div class="val" style="left:778.4px;width:90.6px;top:505.2px">674 262 000,00</div>
<div class="val" style="left:778.4px;width:90.6px;top:533.2px">26 321 571,43</div>
<div class="val" style="left:900.4px;width:90.6px;top:449.2px">16 033 000,00</div>
<div class="val" style="left:900.4px;width:90.6px;top:477.2px">61 000,00</div>
<div class="val" style="left:900.4px;width:90.6px;top:505.2px">1 173 319 000,00</div>
<div class="val" style="left:900.4px;width:90.6px;top:533.2px">305 527 625,00</div>
<div class="val" style="left:1022.4px;width:90.6px;top:449.2px">10 889 000,00</div>
<div class="val" style="left:1022.4px;width:90.6px;top:477.2px">2 598 611 000,00</div>
<div class="val" style="left:1022.4px;width:90.6px;top:505.2px">1 239 927 000,00</div>
<div class="val" style="left:1022.4px;width:90.6px;top:533.2px">557 033,30</div>
<div class="t" style="left:462.9px;top:410px;font:13.2px/16px 'Liberation Sans',sans-serif;letter-spacing:0.11px;color:#444">Initial and aggregated values of the indicator, rub</div>
<div class="t" style="left:456.4px;top:449.4px;font:10.8px/12px 'Liberation Sans',sans-serif;letter-spacing:-0.02px;color:#333">Organization indicator value</div>
<div class="t" style="left:456.4px;top:477.4px;font:10.8px/12px 'Liberation Sans',sans-serif;letter-spacing:-0.23px;color:#333">Minimum value</div>
<div class="t" style="left:456.4px;top:505.4px;font:10.8px/12px 'Liberation Sans',sans-serif;letter-spacing:-0.15px;color:#333">Maximum value</div>
<div class="t" style="left:457.2px;top:533.4px;font:10.8px/12px 'Liberation Sans',sans-serif;letter-spacing:0.15px;color:#333">Average value</div>
<div class="t" style="left:820.2px;top:402.7px;font:bold 12.6px/14px 'Liberation Sans',sans-serif;color:#3a3a3a">2014</div>
<div class="t" style="left:942.2px;top:402.7px;font:bold 12.6px/14px 'Liberation Sans',sans-serif;color:#3a3a3a">2015</div>
<div class="t" style="left:1064.2px;top:402.7px;font:bold 12.6px/14px 'Liberation Sans',sans-serif;color:#3a3a3a">2016</div>
<!-- table scrollbars -->
<div class="abs" style="left:447px;top:564px;width:697px;height:7px;border:1px solid #e0e0e0;border-radius:1px;background:#efefef"></div>
<div class="abs" style="left:446px;top:559px;width:18px;height:17px;border:1px solid #d4d4d4;border-radius:3px;background:#fff"></div>
<div class="abs" style="left:452px;top:564px;width:0;height:0;border-top:3.5px solid transparent;border-bottom:3.5px solid transparent;border-right:4px solid #444"></div>
<div class="abs" style="left:729px;top:559px;width:398px;height:17px;border:1px solid #d9d9d9;border-radius:3px;background:#fff"></div>
<div class="abs" style="left:1127px;top:559px;width:18px;height:17px;border:1px solid #d4d4d4;border-radius:3px;background:#f3f3f3"></div>
<div class="abs" style="left:1134.5px;top:564px;width:0;height:0;border-top:3.5px solid transparent;border-bottom:3.5px solid transparent;border-left:4px solid #9a9a9a"></div>
<div class="abs" style="left:447px;top:577px;width:698px;height:1px;background:#d4d4d4"></div>
<div class="abs" style="left:1145px;top:391px;width:17px;height:18px;border:1px solid #d4d4d4;border-radius:3px;background:#f3f3f3"></div>
<div class="abs" style="left:1150px;top:397.5px;width:0;height:0;border-left:3.5px solid transparent;border-right:3.5px solid transparent;border-bottom:4px solid #9a9a9a"></div>
<div class="abs" style="left:1145px;top:409px;width:17px;height:262px;border:1px solid #d9d9d9;border-radius:3px;background:#fff"></div>
<div class="abs" style="left:1151px;top:671px;width:5px;height:104px;border-left:1px solid #d9d9d9;border-right:1px solid #d9d9d9;background:#f4f4f4"></div>
<div class="abs" style="left:1145px;top:775px;width:17px;height:17px;border:1px solid #d4d4d4;border-radius:3px;background:#fff"></div>
<div class="abs" style="left:1150px;top:782px;width:0;height:0;border-left:3.5px solid transparent;border-right:3.5px solid transparent;border-top:4px solid #444"></div>
<!-- chart -->
<svg class="abs" style="left:0;top:0" width="1259" height="868" viewBox="0 0 1259 868">
<defs><linearGradient id="gg" gradientUnits="userSpaceOnUse" x1="0" y1="676" x2="0" y2="748"><stop offset="0" stop-color="#4dbd7c" stop-opacity="0.42"/><stop offset="0.45" stop-color="#b9c46a" stop-opacity="0.45"/><stop offset="0.75" stop-color="#eba03c" stop-opacity="0.5"/><stop offset="1" stop-color="#f08585" stop-opacity="0.55"/></linearGradient>
<linearGradient id="pg" gradientUnits="userSpaceOnUse" x1="0" y1="612" x2="0" y2="748"><stop offset="0" stop-color="#ec7070" stop-opacity="0.52"/><stop offset="0.5" stop-color="#ec7272" stop-opacity="0.5"/><stop offset="0.8" stop-color="#ea8048" stop-opacity="0.55"/><stop offset="0.98" stop-color="#e8902a" stop-opacity="0.6"/><stop offset="0.99" stop-color="#ec7070" stop-opacity="0.55"/><stop offset="1" stop-color="#ec7070" stop-opacity="0.55"/></linearGradient><linearGradient id="og" gradientUnits="userSpaceOnUse" x1="0" y1="730" x2="0" y2="747"><stop offset="0" stop-color="#ee9a3a" stop-opacity="0.22"/><stop offset="1" stop-color="#f08080" stop-opacity="0.15"/></linearGradient></defs>
<path d="M487.5 590 V771.5 H1138" fill="none" stroke="#d9d9d9" stroke-width="1"/>
<path d="M552 746 L552 746 C573.7 746.0 638.7 755.5 682.0 746.0 C725.3 736.5 768.7 689.0 812.0 689.0 C855.3 689.0 898.7 759.1 942.0 746.3 C985.3 733.5 1050.3 634.4 1072.0 612.0 L1072 746 Z" fill="url(#pg)"/>
<path d="M552 746 L552 678 C573.7 677.7 638.7 670.5 682.0 676.0 C725.3 681.5 768.7 709.5 812.0 711.0 C855.3 712.5 898.7 689.9 942.0 685.0 C985.3 680.1 1050.3 682.1 1072.0 681.5 L1072 746 Z" fill="url(#gg)"/>
<path d="M552 746 L552 732.3 C573.7 732.2 638.7 729.6 682.0 731.7 C725.3 733.8 768.7 745.1 812.0 744.8 C855.3 744.5 898.7 729.8 942.0 730.0 C985.3 730.2 1050.3 743.3 1072.0 746.0 L1072 746 Z" fill="url(#og)"/>
<path d="M552 678 C573.7 677.7 638.7 670.5 682.0 676.0 C725.3 681.5 768.7 709.5 812.0 711.0 C855.3 712.5 898.7 689.9 942.0 685.0 C985.3 680.1 1050.3 682.1 1072.0 681.5" fill="none" stroke="#45b97c" stroke-width="1.6"/>
<path d="M552 732.3 C573.7 732.2 638.7 729.6 682.0 731.7 C725.3 733.8 768.7 745.1 812.0 744.8 C855.3 744.5 898.7 729.8 942.0 730.0 C985.3 730.2 1050.3 743.3 1072.0 746.0" fill="none" stroke="#e08a1e" stroke-width="1.5"/>
<path d="M552 745.6 L1072 745.6" fill="none" stroke="#5bb9ef" stroke-width="1.5"/>
<text x="467.8" y="593.8" text-anchor="middle" font-family="Liberation Sans, sans-serif" font-size="10.6" fill="#8a8a8a">3000</text>
<text x="467.8" y="619.8" text-anchor="middle" font-family="Liberation Sans, sans-serif" font-size="10.6" fill="#8a8a8a">2500</text>
<text x="467.8" y="646.0" text-anchor="middle" font-family="Liberation Sans, sans-serif" font-size="10.6" fill="#8a8a8a">2000</text>
<text x="467.8" y="672.0" text-anchor="middle" font-family="Liberation Sans, sans-serif" font-size="10.6" fill="#8a8a8a">1500</text>
<text x="467.8" y="698.0" text-anchor="middle" font-family="Liberation Sans, sans-serif" font-size="10.6" fill="#8a8a8a">1000</text>
<text x="467.8" y="724.1" text-anchor="middle" font-family="Liberation Sans, sans-serif" font-size="10.6" fill="#8a8a8a">500</text>
<text x="467.8" y="750.0" text-anchor="middle" font-family="Liberation Sans, sans-serif" font-size="10.6" fill="#8a8a8a">0</text>
<text x="467.8" y="776.1" text-anchor="middle" font-family="Liberation Sans, sans-serif" font-size="10.6" fill="#8a8a8a">-500</text>
<text x="552" y="790.2" text-anchor="middle" font-family="Liberation Sans, sans-serif" font-size="10.6" fill="#8a8a8a">2012</text>
<text x="682" y="790.2" text-anchor="middle" font-family="Liberation Sans, sans-serif" font-size="10.6" fill="#8a8a8a">2013</text>
<text x="812" y="790.2" text-anchor="middle" font-family="Liberation Sans, sans-serif" font-size="10.6" fill="#8a8a8a">2014</text>
<text x="942" y="790.2" text-anchor="middle" font-family="Liberation Sans, sans-serif" font-size="10.6" fill="#8a8a8a">2015</text>
<text x="1072" y="790.2" text-anchor="middle" font-family="Liberation Sans, sans-serif" font-size="10.6" fill="#8a8a8a">2016</text>
<text transform="translate(453.2,684) rotate(-90)" text-anchor="middle" font-family="Liberation Sans, sans-serif" font-size="13.4" fill="#8a8a8a">mln. rub</text>
<text x="552" y="666.9" text-anchor="middle" font-family="Liberation Sans, sans-serif" font-size="10.8" fill="#3f3f3f" word-spacing="-0.6">1 304 012 000</text>
<text x="682" y="665.9" text-anchor="middle" font-family="Liberation Sans, sans-serif" font-size="10.8" fill="#3f3f3f" word-spacing="-0.6">1 323 807 000</text>
<text x="552" y="722.2" text-anchor="middle" font-family="Liberation Sans, sans-serif" font-size="10.8" fill="#3f3f3f" word-spacing="-0.6">262 913 375</text>
<text x="682" y="720.9" text-anchor="middle" font-family="Liberation Sans, sans-serif" font-size="10.8" fill="#3f3f3f" word-spacing="-0.6">270 423 143</text>
<text x="552" y="763.9" text-anchor="middle" font-family="Liberation Sans, sans-serif" font-size="10.8" fill="#3f3f3f" word-spacing="-0.6">8 901 000</text>
<text x="682" y="763.9" text-anchor="middle" font-family="Liberation Sans, sans-serif" font-size="10.8" fill="#3f3f3f" word-spacing="-0.6">17 027 000</text>
<text x="812" y="699.9" text-anchor="middle" font-family="Liberation Sans, sans-serif" font-size="10.8" fill="#3f3f3f" word-spacing="-0.6">674 262 000</text>
<text x="812" y="734.2" text-anchor="middle" font-family="Liberation Sans, sans-serif" font-size="10.8" fill="#3f3f3f" word-spacing="-0.6">26 321 571</text>
<text x="812" y="764.9" text-anchor="middle" font-family="Liberation Sans, sans-serif" font-size="10.8" fill="#3f3f3f" word-spacing="-0.6">7 541 000</text>
<text x="942" y="673.4" text-anchor="middle" font-family="Liberation Sans, sans-serif" font-size="10.8" fill="#3f3f3f" word-spacing="-0.6">1 173 319 000</text>
<text x="942" y="718.9" text-anchor="middle" font-family="Liberation Sans, sans-serif" font-size="10.8" fill="#3f3f3f" word-spacing="-0.6">305 527 625</text>
<text x="942" y="763.9" text-anchor="middle" font-family="Liberation Sans, sans-serif" font-size="10.8" fill="#3f3f3f" word-spacing="-0.6">16 033 000</text>
<text x="1072.3" y="670.9" text-anchor="middle" font-family="Liberation Sans, sans-serif" font-size="10.8" fill="#3f3f3f" word-spacing="-0.6">1 239 927 000</text>
<text x="1073.4" y="734.7" text-anchor="middle" font-family="Liberation Sans, sans-serif" font-size="10.8" fill="#3f3f3f" word-spacing="-0.6">10 889 000</text>
<text x="1072" y="764.9" text-anchor="middle" font-family="Liberation Sans, sans-serif" font-size="10.8" fill="#3f3f3f" word-spacing="-0.6">557 033</text>
</svg>
</div>
</body>
</html>
